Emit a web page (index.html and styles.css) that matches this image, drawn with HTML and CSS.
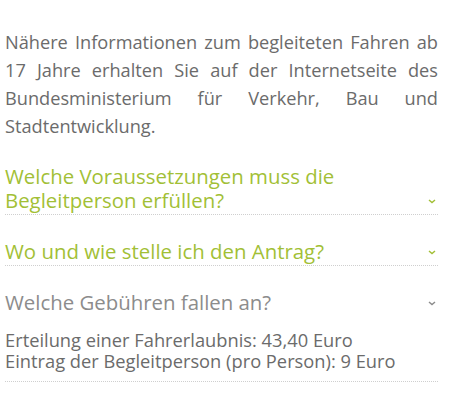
FILE: index.html
```html
<!DOCTYPE html>
<html lang="de">
<head>
<meta charset="utf-8">
<link rel="stylesheet" href="styles.css">
</head>
<body>
<div class="page">
  <p class="intro">Nähere Informationen zum begleiteten Fahren ab 17 Jahre erhalten Sie auf der Internetseite des Bundesministerium für Verkehr, Bau und Stadtentwicklung.</p>
  <div class="item">
    <div class="head green">
      <span class="title">Welche Voraussetzungen muss die Begleitperson erfüllen?</span>
      <svg class="chev" width="8" height="5" viewBox="0 0 8 5"><path d="M1 1 L4 3.6 L7 1" fill="none" stroke="currentColor" stroke-width="1.4"/></svg>
    </div>
  </div>
  <div class="item">
    <div class="head green">
      <span class="title">Wo und wie stelle ich den Antrag?</span>
      <svg class="chev" width="8" height="5" viewBox="0 0 8 5"><path d="M1 1 L4 3.6 L7 1" fill="none" stroke="currentColor" stroke-width="1.4"/></svg>
    </div>
  </div>
  <div class="item open">
    <div class="head gray">
      <span class="title">Welche Gebühren fallen an?</span>
      <svg class="chev" width="8" height="5" viewBox="0 0 8 5"><path d="M1 1 L4 3.6 L7 1" fill="none" stroke="currentColor" stroke-width="1.4"/></svg>
    </div>
    <div class="body">Erteilung einer Fahrerlaubnis: 43,40 Euro<br>Eintrag der Begleitperson (pro Person): 9 Euro</div>
  </div>
</div>
</body>
</html>
```
FILE: styles.css
```css
html, body { margin: 0; padding: 0; background: #fff; }
body { font-family: "Open Sans", "Noto Sans", sans-serif; color: #666; }
.page { padding: 0 12px 0 5px; }
.intro {
  margin: 0;
  padding-top: 28px;
  font-size: 18.2px;
  line-height: 28px;
  text-align: justify;
  color: #6b6b6b;
}
.item { border-bottom: 1px dotted #cfcfcf; }
.head {
  display: flex;
  align-items: flex-end;
  justify-content: space-between;
  padding-top: 24px;
  padding-bottom: 2px;
  font-size: 20.4px;
  line-height: 24px;
}
.head.green { color: #a2bf36; }
.head.gray { color: #8c8c8c; }
.chev { flex: none; margin: 0 2px 8px 8px; }
.body {
  font-size: 18.3px;
  line-height: 21px;
  color: #6b6b6b;
  padding: 13px 0 10px;
}
```
